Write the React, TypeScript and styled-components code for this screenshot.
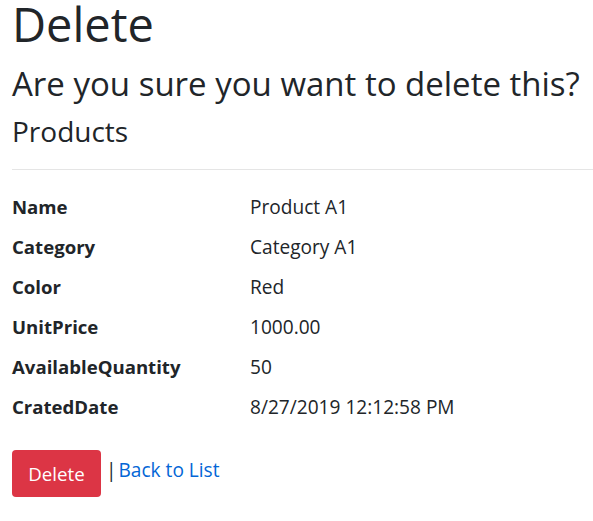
import styled, { createGlobalStyle } from "styled-components";

const GlobalStyle = createGlobalStyle`
  * {
    box-sizing: border-box;
  }
  body {
    margin: 0;
    background: #fff;
    color: #212529;
    font-family: "Segoe UI", "Open Sans", "Noto Sans", sans-serif;
    font-size: 19.1px;
    line-height: 1.5;
  }
`;

const fields: [string, string][] = [
  ["Name", "Product A1"],
  ["Category", "Category A1"],
  ["Color", "Red"],
  ["UnitPrice", "1000.00"],
  ["AvailableQuantity", "50"],
  ["CratedDate", "8/27/2019 12:12:58 PM"],
];

export default function App() {
  return (
    <>
      <GlobalStyle />
      <St.Page>
        <St.Title>Delete</St.Title>
        <St.Question>Are you sure you want to delete this?</St.Question>
        <St.Section>
          <St.Entity>Products</St.Entity>
          <St.Rule />
          <St.Details>
            {fields.map(([label, value]) => (
              <St.Row key={label}>
                <St.Label>{label}</St.Label>
                <St.Value>{value}</St.Value>
              </St.Row>
            ))}
          </St.Details>
          <St.Actions>
            <St.DeleteButton type="button">Delete</St.DeleteButton>
            <St.Separator>|</St.Separator>
            <St.Link href="#">Back to List</St.Link>
          </St.Actions>
        </St.Section>
      </St.Page>
    </>
  );
}

const St = {
  Page: styled.main`
    padding: 0 0 0 12px;
  `,
  Title: styled.h1`
    margin: -4px 0 0;
    font-size: 47px;
    font-weight: 400;
    line-height: 56px;
  `,
  Question: styled.h3`
    margin: 12px 0 0;
    font-size: 33px;
    font-weight: 400;
    line-height: 40px;
    white-space: nowrap;
  `,
  Section: styled.div``,
  Entity: styled.h4`
    margin: 9px 0 0;
    font-size: 28px;
    font-weight: 400;
    line-height: 36px;
  `,
  Rule: styled.hr`
    margin: 20px 0 0;
    border: 0;
    border-top: 1px solid rgba(0, 0, 0, 0.1);
  `,
  Details: styled.dl`
    margin: 17px 0 0;
    display: flex;
    flex-direction: column;
  `,
  Row: styled.div`
    display: grid;
    grid-template-columns: 238px 1fr;
    height: 40px;
    align-items: center;
  `,
  Label: styled.dt`
    font-size: 18.6px;
    font-weight: 700;
  `,
  Value: styled.dd`
    margin: 0;
  `,
  Actions: styled.div`
    margin-top: 23px;
    display: flex;
    align-items: center;
  `,
  DeleteButton: styled.button`
    width: 89px;
    height: 47px;
    margin-right: 5px;
    border: 0;
    border-radius: 4px;
    background: #dc3545;
    color: #fff;
    font-family: inherit;
    font-size: 18.7px;
    cursor: pointer;
  `,
  Separator: styled.span`
    margin: 0 2px 6px 0;
  `,
  Link: styled.a`
    margin-bottom: 6px;
    color: #0366d6;
    text-decoration: none;
  `,
};
